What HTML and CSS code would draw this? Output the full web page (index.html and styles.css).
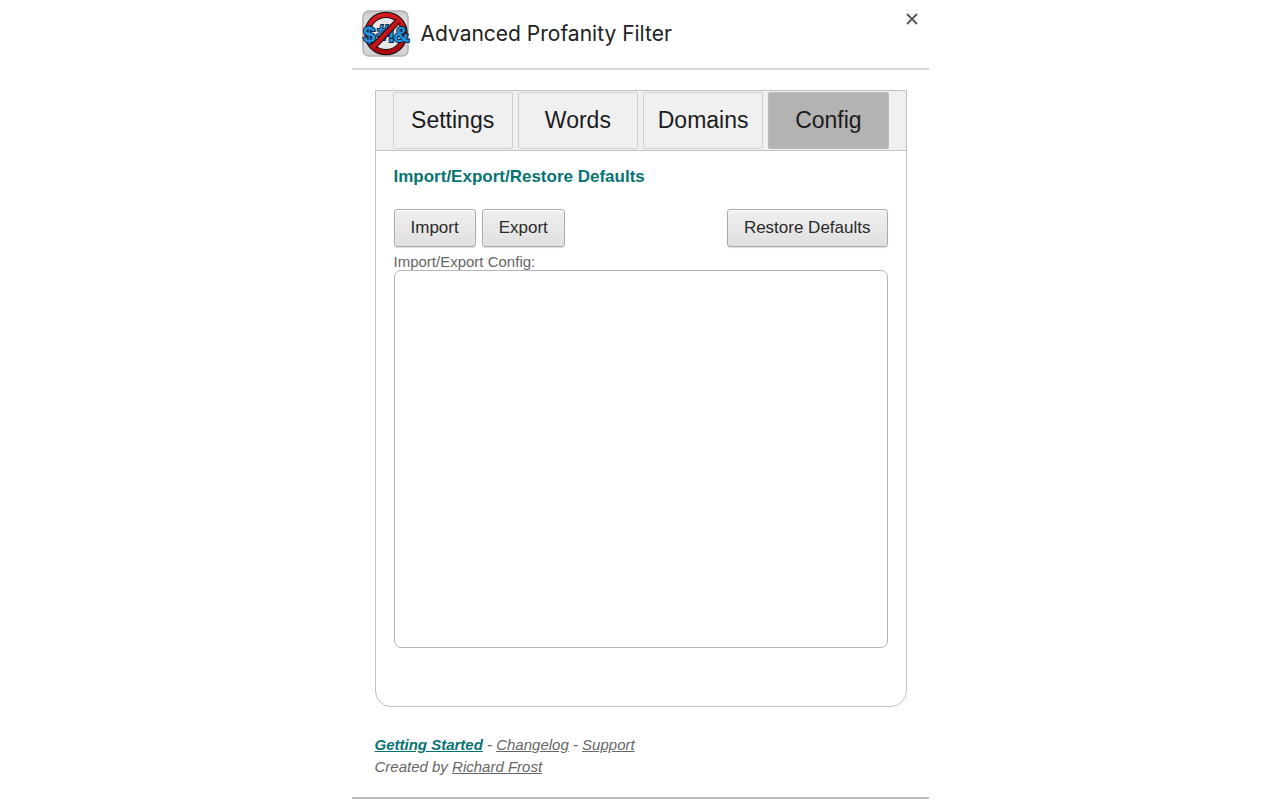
FILE: index.html
```html
<!DOCTYPE html>
<html lang="en">
<head>
<meta charset="utf-8">
<meta name="viewport" content="width=device-width, initial-scale=1">
<title>Advanced Profanity Filter</title>
<link rel="stylesheet" href="styles.css">
</head>
<body>
<div class="dialog">
  <header class="header">
    <svg class="logo" viewBox="0 0 48 48" aria-hidden="true">
      <defs>
        <linearGradient id="tile" x1="0" y1="0" x2="0" y2="1">
          <stop offset="0" stop-color="#c9c9c9"/>
          <stop offset="0.25" stop-color="#dedede"/>
          <stop offset="1" stop-color="#d2d2d2"/>
        </linearGradient>
        <linearGradient id="red" x1="0" y1="0" x2="0" y2="1">
          <stop offset="0" stop-color="#d81a20"/>
          <stop offset="1" stop-color="#a80a10"/>
        </linearGradient>
      </defs>
      <rect x="1" y="1" width="46" height="46" rx="6" fill="url(#tile)" stroke="#b2b2b2" stroke-width="1.5"/>
      <circle cx="24.500" cy="24" r="19" fill="#e8e8e8" stroke="#111" stroke-width="6.500"/>
      <circle cx="24.500" cy="24" r="19" fill="none" stroke="url(#red)" stroke-width="4.500"/>
      <g class="logo-text">
        <text x="15" y="31">#</text>
        <text x="26" y="33">!</text>
      </g>
      <path d="M37 11 12 37" stroke="#111" stroke-width="6.500"/>
      <path d="M38 10 11 38" stroke="#c81219" stroke-width="4.500"/>
      <g class="logo-text">
        <text x="1" y="33">$</text>
        <text x="32" y="33">&amp;</text>
      </g>
    </svg>
    <h1 class="title">Advanced Profanity Filter</h1>
    <button class="close" type="button" aria-label="Close">
      <svg class="close-icon" viewBox="0 0 12 12" aria-hidden="true"><path d="M1 1 11 11M11 1 1 11" stroke="#58595b" stroke-width="2"/></svg>
    </button>
  </header>

  <main class="panel">
    <nav class="tabs" role="tablist">
      <button class="tab" type="button" role="tab">Settings</button>
      <button class="tab" type="button" role="tab">Words</button>
      <button class="tab" type="button" role="tab">Domains</button>
      <button class="tab tab-active" type="button" role="tab" aria-selected="true">Config</button>
    </nav>
    <section class="content">
      <h2 class="heading">Import/Export/Restore Defaults</h2>
      <div class="actions">
        <button class="button" type="button">Import</button>
        <button class="button" type="button">Export</button>
        <button class="button button-end" type="button">Restore Defaults</button>
      </div>
      <label class="label" for="config">Import/Export Config:</label>
      <textarea class="config" id="config"></textarea>
    </section>
  </main>

  <footer class="footer">
    <div><a class="link link-strong" href="#">Getting Started</a> - <a class="link" href="#">Changelog</a> - <a class="link" href="#">Support</a></div>
    <div>Created by <a class="link" href="#">Richard Frost</a></div>
  </footer>
</div>
</body>
</html>
```
FILE: styles.css
```css
* {
  box-sizing: border-box;
}

body {
  margin: 0;
  background: #fff;
  color: #666;
  font-family: "Liberation Sans", Arial, sans-serif;
}

button {
  font-family: inherit;
  cursor: pointer;
}

.dialog {
  display: flex;
  flex-direction: column;
  max-width: 577px;
  min-height: calc(100vh - 1px);
  margin: 0 auto;
  border-bottom: 2px solid #bbb;
}

.header {
  display: flex;
  align-items: center;
  gap: 12px;
  padding: 10px 10px 11px;
  border-bottom: 2px solid #d5d5d5;
}

.logo {
  width: 47px;
  height: 47px;
  overflow: visible;
}

.logo-text {
  font: bold 23px "Liberation Sans", Arial, sans-serif;
  fill: #2492dc;
  stroke: #082848;
  stroke-width: 2px;
  paint-order: stroke;
}

.title {
  flex: 1;
  margin: 0;
  color: #222;
  font: 400 21px/26px Inter, sans-serif;
}

.close {
  display: flex;
  align-self: flex-start;
  padding: 3px 1px;
  border: 0;
  background: none;
}

.close-icon {
  width: 12px;
  height: 12px;
}

.panel {
  display: flex;
  flex: 1;
  flex-direction: column;
  margin: 20px 22px 0 23px;
  border: 1px solid #c0c0c0;
  border-radius: 0 0 16px 16px;
}

.tabs {
  display: flex;
  gap: 5px;
  padding: 1px 17px;
  border-bottom: 1px solid #c4c4c4;
  background: #f0f0f0;
}

.tab {
  flex: 1;
  height: 57px;
  padding: 0 0 1px;
  border: 1px solid #d0d0d0;
  border-radius: 2px;
  background: #f0f0f0;
  color: #1c1c1c;
  font-size: 23px;
}

.tab-active {
  border-color: #bbb;
  background: #b3b3b3;
}

.content {
  display: flex;
  flex: 1;
  flex-direction: column;
  padding: 16px 18px 58px;
}

.heading {
  margin: 0 0 22px;
  color: #077474;
  font-size: 17px;
  line-height: 20px;
}

.actions {
  display: flex;
  gap: 6px;
}

.button {
  height: 38px;
  padding: 0 16px 1px;
  border: 1px solid #aaa;
  border-radius: 3px;
  background: linear-gradient(#f0f0f0, #dfdfdf);
  box-shadow: inset 0 1px 1px #fff, 0 1px 1px #ddd;
  color: #2a2a2a;
  font-size: 17px;
}

.button-end {
  margin-left: auto;
}

.label {
  margin-top: 6px;
  font-size: 15px;
  line-height: 17px;
}

.config {
  flex: 1;
  width: 100%;
  min-height: 120px;
  padding: 8px;
  border: 1px solid #b5b5b5;
  border-radius: 7px;
  outline: 0;
  resize: none;
  font: 15px "Liberation Mono", monospace;
}

.footer {
  padding: 27px 23px 19px;
  font-size: 15px;
  font-style: italic;
  line-height: 22px;
}

.link {
  color: inherit;
}

.link-strong {
  color: #077474;
  font-weight: 700;
}
```
